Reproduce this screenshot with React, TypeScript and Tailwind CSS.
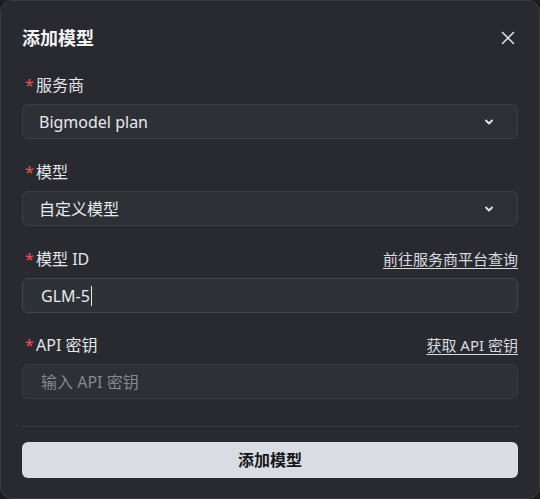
import React from "react";

const font = { fontFamily: '"Noto Sans", "Noto Sans CJK SC", sans-serif' };

function Chevron() {
  return (
    <svg width="12" height="12" viewBox="0 0 12 12" fill="none" className="text-gray-200">
      <path d="M3 4.5 L6 7.5 L9 4.5" stroke="currentColor" strokeWidth="1.8" strokeLinecap="round" strokeLinejoin="round" />
    </svg>
  );
}

function Label({ text, link }: { text: string; link?: string }) {
  return (
    <div className="flex items-center justify-between h-6">
      <div className="flex items-center text-[16px] text-[#e4e6eb]">
        <span className="text-[#f0524f] w-[14px] pl-[3px] text-[16px] leading-none">*</span>
        <span>{text}</span>
      </div>
      {link && <span className="text-[15px] text-[#d8dae0] underline underline-offset-[3px]">{link}</span>}
    </div>
  );
}

function Select({ value }: { value: string }) {
  return (
    <div className="h-[35px] rounded-[6px] border border-[#3b3e44] bg-[#2d3035] flex items-center justify-between pl-4 pr-[22px]">
      <span className="text-[16px] text-[#e8eaee]">{value}</span>
      <Chevron />
    </div>
  );
}

export default function App() {
  return (
    <div className="w-[540px] h-[499px] bg-[#1c1d20]" style={font}>
      <div className="w-[540px] h-[499px] rounded-[12px] border border-[#3a3d43] bg-[#282a2f] px-[21px] flex flex-col">
        <div className="flex items-center justify-between mt-[23px] h-7">
          <span className="text-[18px] font-bold text-[#f2f3f5]">添加模型</span>
          <svg width="14" height="14" viewBox="0 0 14 14" className="mr-[3px] text-gray-200">
            <path d="M1.5 1.5 L12.5 12.5 M12.5 1.5 L1.5 12.5" stroke="currentColor" strokeWidth="1.5" strokeLinecap="round" />
          </svg>
        </div>

        <div className="mt-[21px] flex flex-col gap-[7px]">
          <Label text="服务商" />
          <Select value="Bigmodel plan" />
        </div>

        <div className="mt-[21px] flex flex-col gap-[7px]">
          <Label text="模型" />
          <Select value="自定义模型" />
        </div>

        <div className="mt-[21px] flex flex-col gap-[7px]">
          <Label text="模型 ID" link="前往服务商平台查询" />
          <div className="h-[35px] rounded-[6px] border border-[#43464c] bg-[#2e3136] flex items-center pl-[18px]">
            <span className="text-[16px] text-[#e8eaee]">GLM-5</span>
            <span className="w-px h-[20px] bg-[#e8eaee] ml-[1px]" />
          </div>
        </div>

        <div className="mt-[20px] flex flex-col gap-[7px]">
          <Label text="API 密钥" link="获取 API 密钥" />
          <div className="h-[35px] rounded-[6px] border border-[#383b41] bg-[#2d3035] flex items-center pl-[18px]">
            <span className="text-[16px] text-[#868990]">输入 API 密钥</span>
          </div>
        </div>

        <div className="mt-[27px] h-px bg-[#3a3d43]" />

        <button className="mt-[15px] h-[36px] rounded-[6px] bg-[#d9dce3] text-[16px] font-bold text-[#16171a]">
          添加模型
        </button>
      </div>
    </div>
  );
}
